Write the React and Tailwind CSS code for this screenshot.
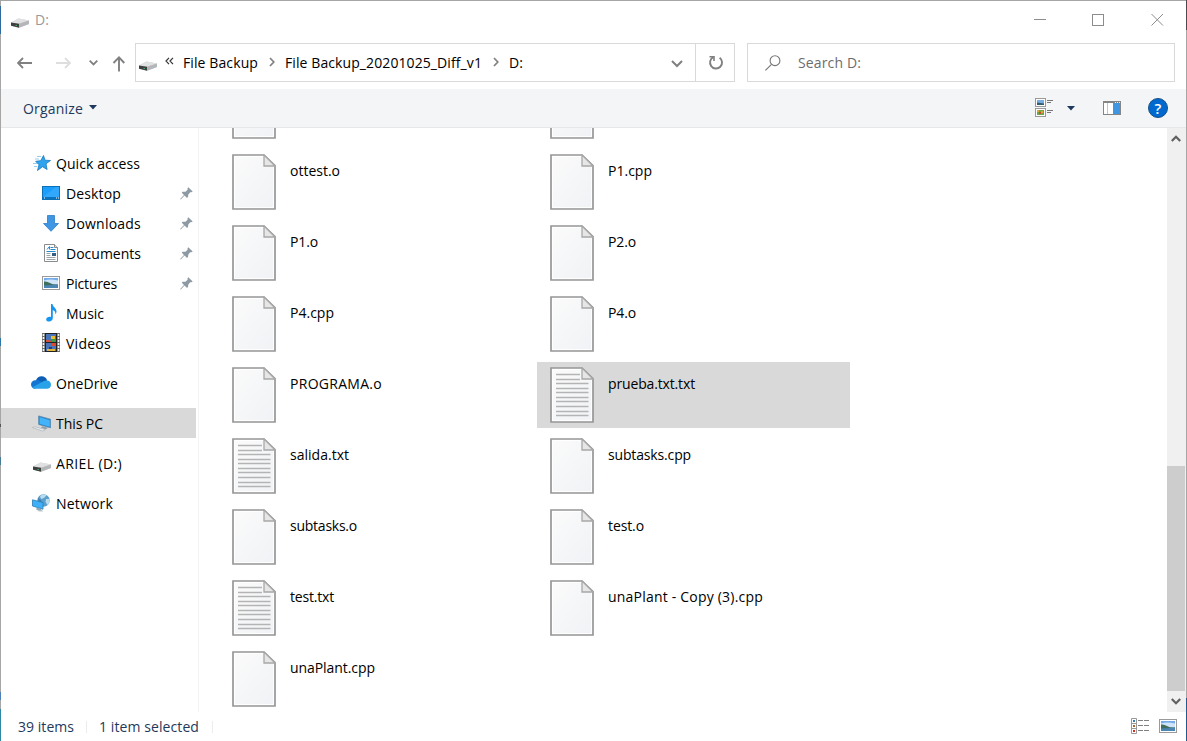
import React, { useLayoutEffect, useRef } from "react";

/* Text label whose letter spacing is adjusted so that it fills a given width. */
function Label({ w, className = "", children }) {
  const ref = useRef(null);
  useLayoutEffect(() => {
    const el = ref.current;
    el.style.letterSpacing = "0px";
    const natural = el.getBoundingClientRect().width;
    el.style.letterSpacing = (w - natural) / el.textContent.length + "px";
  }, [w, children]);
  return (
    <span ref={ref} className={"shrink-0 whitespace-pre text-[14px] leading-5 " + className}>
      {children}
    </span>
  );
}

function DriveIcon() {
  return (
    <svg width="18" height="10" viewBox="0 0 18 10" className="shrink-0">
      <path d="M0 4.6 7.5.4 18 2.4V6L8 9.8 0 7.6Z" fill="#c9cacc" />
      <path d="M0 4.6 7.5.4 18 2.4 8 5.8Z" fill="#e0e1e2" />
      <path d="M0 4.4 8 5.7v4L0 7.8Z" fill="#3d3f40" />
      <path d="M8 5.7 18 2.4V6L8 9.8Z" fill="#b4b6b9" />
      <path d="M4.5 7h1.5v1H4.5z" fill="#3fae5b" />
    </svg>
  );
}

function Chevron({ className = "", d = "M1 1l4 4 4-4", w = 10, h = 6, color = "#808080", sw = 2 }) {
  return (
    <svg width={w} height={h} viewBox={`0 0 ${w} ${h}`} className={"shrink-0 " + className}>
      <path d={d} fill="none" stroke={color} strokeWidth={sw} />
    </svg>
  );
}

function PictureIcon() {
  return (
    <svg width="18" height="14" viewBox="0 0 18 14">
      <rect x=".5" y=".5" width="17" height="13" fill="#fff" stroke="#9a9a9a" />
      <rect x="2" y="2" width="14" height="10" fill="#72abea" />
      <path d="M2 4.500q6-2 14 0v4H2z" fill="#cfe4f8" />
      <path d="M2 5.500q3-.5 6 1.500t8 1.500V10H2z" fill="#3f6f5c" />
      <path d="M2 9.500l14-.8V12H2z" fill="#4b85b4" />
    </svg>
  );
}

const icons = {
  quick: (
    <svg width="18" height="16" viewBox="0 0 18 16" className="ml-[2px]">
      <path d="M10.500.5l1.500 4.700 5.500.3-4.500 3.300 1.100 5.700-4.600-2.800-5 3.800 1.500-5.700L2.700 6.300l5-.6z" fill="#2ea3ee" stroke="#1779bd" strokeWidth=".8" />
      <path d="M4 1.500h4M2 4h4M0 8.500h4M1 11.500h3" stroke="#7cc0ec" strokeWidth=".8" />
    </svg>
  ),
  desktop: (
    <svg width="18" height="14" viewBox="0 0 18 14">
      <rect x=".5" y=".5" width="17" height="13" fill="#1a9dfb" stroke="#0a70b8" />
      <path d="M1 11 14 1h3v10H1z" fill="#31a8fd" />
      <rect x="1" y="11" width="16" height="2" fill="#0b72bd" />
      <path d="M2 12h1M14 12h1M16 12h1" stroke="#fff" />
    </svg>
  ),
  downloads: (
    <svg width="16" height="17" viewBox="0 0 16 17">
      <path d="M4.500.5h7v8h4L8 16.300.5 8.500h4z" fill="#3f96e3" stroke="#2b7cc8" strokeWidth=".8" />
    </svg>
  ),
  documents: (
    <svg width="14" height="18" viewBox="0 0 14 18">
      <path d="M.5.500h10l3 3v14H.5z" fill="#fff" stroke="#8c8c8c" />
      <path d="M10.500.5v3h3" fill="#ddd" stroke="#8c8c8c" />
      <path d="M3 5.500 5.500 2.500v3M6.500 3.500h3M6.500 5.500h5M2.500 7.500h9" fill="none" stroke="#2389c9" />
      <path d="M2.500 9.500h4M2.500 11.500h4M2.500 13.500h9M2.500 15.500h9" stroke="#9aa4ab" />
      <rect x="8" y="9" width="4" height="3" fill="#315f86" />
    </svg>
  ),
  pictures: <PictureIcon />,
  music: (
    <svg width="11" height="18" viewBox="0 0 11 18">
      <path d="M5 0h1.500c.3 3 4 4.200 4 7.300 0 1.300-.5 2.400-1.200 3.200.5-2.500-.8-3.700-2.500-4.500V14c0 2.200-1.800 3.600-3.700 3.600C1.300 17.600.2 16.700.2 15.400c0-1.700 2.300-3 4.800-2.400z" fill="#1496f0" />
    </svg>
  ),
  videos: (
    <svg width="18" height="19" viewBox="0 0 18 19" className="mb-px">
      <rect width="18" height="19" fill="#6a6a6c" />
      <rect x="3" width="12" height="19" fill="#222" />
      <path d="M1.500 1v18M16.500 1v18" stroke="#f4f4f4" strokeWidth="1.600" strokeDasharray="2 1" />
      <rect x="4" y="1" width="10" height="8" fill="#4a74b8" />
      <rect x="4" y="10" width="10" height="8" fill="#4a74b8" />
      <path d="M4 7h3l2 1v1H4z" fill="#d6503c" />
      <path d="M9 3h4v3H9z" fill="#e8bd2e" />
      <path d="M10 6h3v3h-3z" fill="#3f9a46" />
      <path d="M10 10h3v3h-3z" fill="#d94b32" />
      <path d="M5 16h8v2H5z" fill="#e2b63a" />
      <path d="M7 14h3v2H7z" fill="#223a78" />
    </svg>
  ),
  onedrive: (
    <svg width="20" height="13" viewBox="0 0 20 13" className="mb-px">
      <path d="M5 4.300C6 1.600 8 .2 10.500.2c2.900 0 5 1.700 5.700 4.300L9 9z" fill="#0c5fb5" />
      <path d="M4.300 4.200C2 4.200 0 6.100 0 8.500 0 11 2 12.800 4.300 12.800L13 7 8 4.500c-1-.6-2.300-.5-3.700-.3z" fill="#1376d2" />
      <path d="M16 4.500c2.300 0 4 1.900 4 4.200 0 2.400-1.800 4.100-4.100 4.100H4.300c-1.300 0-2.400-.5-3.200-1.400L12 5.400c1-.7 2.500-.9 4-.9z" fill="#2aa2ea" />
    </svg>
  ),
  pc: (
    <svg width="20" height="17" viewBox="0 0 20 17" className="mt-px ml-px">
      <path d="M7 .5 19.500 4v9L7 9.500z" fill="#2b88cc" stroke="#4d7fa6" strokeWidth=".7" />
      <path d="M8 1.900 18.700 5v6.800L8 8.700z" fill="#43b4fa" />
      <path d="M11 11.500 17 13l-2.500 1.500-5-1.500z" fill="#8fa0ad" />
      <path d="M.5 12.800 3 12l11 3-2.500 1.500z" fill="#f4f6f7" stroke="#a5adb3" strokeWidth=".7" />
    </svg>
  ),
  drive: <div className="mt-[7px] mr-[-1px]"><DriveIcon /></div>,
  network: (
    <svg width="18" height="18" viewBox="0 0 18 18">
      <circle cx="11.500" cy="6.500" r="6.200" fill="#5c9fca" />
      <path d="M8 2c2-2 5-2 6.500-.8L12 4 9 5zM14 5l3.500 0c.4 3-.5 5-2 6l-2-3z" fill="#b9dcee" />
      <path d="M6 4 9 6l2 5H7z" fill="#3d7fae" />
      <path d="M.5 5.800 11 8.500v6.700L.5 12z" fill="#3fb0f7" stroke="#287eb9" strokeWidth=".8" />
      <path d="M5 13.500 9.500 15l-1 1.500-4.500-1z" fill="#8fa4b2" />
      <path d="M5 16h5l1 1.500H7z" fill="#b8c3ca" />
    </svg>
  ),
};

function Pin() {
  return (
    <svg width="13" height="13" viewBox="0 0 13 13" className="mr-[3px]">
      <path d="M8.300.3 12.700 4.600 11.400 5.300 10.200 5.200 8.300 7.500 8 10.300 6.800 10.800 4.500 8.500 1 12.300.3 12.500.4 11.800 4 8 1.800 5.800 2.500 4.800 5.500 4.700 7.600 2.700 7.500 1.300Z" fill="#8d9aa4" />
    </svg>
  );
}

function NavRow({ icon, text, w, child, pinned, selected }) {
  return (
    <div className={"flex h-[30px] w-[195px] items-center " + (selected ? "bg-[#d9d9d9]" : "")}>
      <div className={"flex w-[20px] shrink-0 justify-center " + (child ? "ml-[40px]" : "ml-[30px]")}>
        {icons[icon]}
      </div>
      <Label w={w} className="mt-[2px] ml-[5px]">{text}</Label>
      {pinned && <div className="ml-auto"><Pin /></div>}
    </div>
  );
}

function FileIcon({ lined }) {
  return (
    <svg width="44" height="56" viewBox="0 0 44 56" className="shrink-0">
      <defs>
        <linearGradient id="sheet" x1="0" y1="0" x2="1" y2="1">
          <stop offset="0" stopColor="#fbfbfb" />
          <stop offset="1" stopColor="#f0f2f5" />
        </linearGradient>
      </defs>
      <path d="M1 1H32L43 11.500V55H1Z" fill="url(#sheet)" stroke="#979797" strokeWidth="1.700" />
      <path d="M2.500 2.500H31M2.500 2.500V53.500H41.500V12" fill="none" stroke="#fff" strokeWidth=".9" />
      <path d="M32 1V12H43Z" fill="#e6e6e6" stroke="#a8a8a8" strokeWidth="1.300" />
      {lined && (
        <path
          d="M6 7.500H30M6 12.500H30M6 16.500H38.500M6 21.500H38.500M6 25.500H38.500M6 30.500H38.500M6 34.500H38.500M6 39.500H38.500M6 44.500H38.500M6 48.500H38.500"
          stroke="#b4b4b4"
          strokeWidth="1.500"
        />
      )}
    </svg>
  );
}

function FileCell({ name, w, lined, selected }) {
  return (
    <div className={"flex h-[66px] w-[313px] items-start pt-[5px] pl-[13px] " + (selected ? "bg-[#d9d9d9]" : "")}>
      <FileIcon lined={lined} />
      {name && <Label w={w} className="mt-[7px] ml-[14px]">{name}</Label>}
    </div>
  );
}

const files = [
  {}, {},
  { name: "ottest.o", w: 50 }, { name: "P1.cpp", w: 44 },
  { name: "P1.o", w: 28 }, { name: "P2.o", w: 28 },
  { name: "P4.cpp", w: 44 }, { name: "P4.o", w: 28 },
  { name: "PROGRAMA.o", w: 92 }, { name: "prueba.txt.txt", w: 87, lined: true, selected: true },
  { name: "salida.txt", w: 59, lined: true }, { name: "subtasks.cpp", w: 83 },
  { name: "subtasks.o", w: 67 }, { name: "test.o", w: 36 },
  { name: "test.txt", w: 44, lined: true }, { name: "unaPlant - Copy (3).cpp", w: 155 },
  { name: "unaPlant.cpp", w: 85 },
];

function TitleBar() {
  return (
    <div className="flex h-[37px] items-center">
      <div className="mt-[7px] ml-[10px]"><DriveIcon /></div>
      <Label w={14} className="ml-[6px] text-[#999999]">D:</Label>
      <svg width="130" height="14" viewBox="0 0 130 14" className="mr-[22px] ml-auto" fill="none" stroke="#8c8c8c">
        <path d="M0 6.500H12" />
        <rect x="58.500" y="1.500" width="11" height="11" />
        <path d="M117.500 1 129 12.500M129 1 117.500 12.500" />
      </svg>
    </div>
  );
}

function AddressRow() {
  return (
    <div className="flex h-[51px] items-start pt-[5px]">
      <div className="flex h-[39px] w-[134px] items-center">
        <svg width="16" height="12" viewBox="0 0 16 12" className="ml-4" fill="none" stroke="#808080" strokeWidth="1.800">
          <path d="M15 6H1.500M6 1 1 6l5 5" />
        </svg>
        <svg width="16" height="12" viewBox="0 0 16 12" className="ml-[23px]" fill="none" stroke="#dedede" strokeWidth="1.800">
          <path d="M0 6H14M9 1l5 5-5 5" />
        </svg>
        <Chevron className="ml-[17px]" w={9} h={6} d="M.7.7 4.500 4.500 8.300.7" sw={1.800} />
        <svg width="13" height="16" viewBox="0 0 13 16" className="mt-[3px] ml-[14px]" fill="none" stroke="#808080" strokeWidth="1.900">
          <path d="M7 15.500V1.500M1.500 7 7 1.400 12.300 7" />
        </svg>
      </div>
      <div className="flex h-[39px] w-[600px] items-center border border-[#d9d9d9]">
        <div className="mt-[7px] ml-[3px]"><DriveIcon /></div>
        <svg width="9" height="8" viewBox="0 0 9 8" className="mb-[3px] ml-[8px]" fill="none" stroke="#333" strokeWidth="1.200">
          <path d="M4 .8 1 4l3 3.200M8 .8 5 4l3 3.200" />
        </svg>
        <Label w={75} className="ml-[9px]">File Backup</Label>
        <Chevron className="mb-[2px] ml-[11px]" w={6} h={10} d="M1 1l3.800 4L1 9" sw={1.700} />
        <Label w={197} className="ml-[10px]">File Backup_20201025_Diff_v1</Label>
        <Chevron className="mb-[2px] ml-[11px]" w={6} h={10} d="M1 1l3.800 4L1 9" sw={1.700} />
        <Label w={14} className="ml-[10px]">D:</Label>
        <Chevron className="mt-[3px] ml-auto mr-[12px]" w={12} h={8} d="M1 1l5 5 5-5" />
        <div className="flex h-full w-[39px] items-center justify-center border-l border-[#d9d9d9]">
          <svg width="16" height="16" viewBox="0 0 16 16" className="ml-px" fill="none" stroke="#808080" strokeWidth="1.900">
            <path d="M11.600 2.700a6 6 0 1 1-6.300-.5" />
            <path d="M1.500 1.800H6V6" strokeWidth="1.600" />
          </svg>
        </div>
      </div>
      <div className="ml-3 flex h-[39px] w-[428px] items-center border border-[#d9d9d9]">
        <svg width="16" height="16" viewBox="0 0 16 16" className="ml-[17px]" fill="none" stroke="#757575" strokeWidth="1.100">
          <circle cx="10" cy="5.700" r="4.900" />
          <path d="M6.500 9.300.4 15.400" />
        </svg>
        <Label w={63} className="ml-[17px] text-[#6d6d6d]">Search D:</Label>
      </div>
    </div>
  );
}

function Toolbar() {
  return (
    <div className="flex h-[39px] shrink-0 items-center border-b border-[#e6e7e8] bg-[#f4f5f7] text-[#1e395b]">
      <Label w={60} className="mt-[2px] ml-[22px]">Organize</Label>
      <svg width="8" height="5" viewBox="0 0 8 5" className="mb-px ml-[6px]"><path d="M0 0h8L4 4.500z" fill="#1e395b" /></svg>
      <svg width="18" height="19" viewBox="0 0 18 19" className="mb-px ml-auto">
        <rect x=".5" y=".5" width="10" height="8" fill="#fff" stroke="#999" />
        <rect x="2" y="2" width="7" height="5" fill="#76acdf" />
        <path d="M2 4.500l7 1V7H2z" fill="#345c6b" />
        <rect x=".5" y="10.500" width="10" height="8" fill="#fff" stroke="#999" />
        <rect x="2" y="12" width="7" height="5" fill="#6fa646" />
        <path d="M2 12h2v2H2zM6 13h2v2H6z" fill="#e0a33a" />
        <path d="M4 14h2v2H4z" fill="#c94a35" />
        <path d="M12 2.500h6M12 4.500h4M12 12.500h6M12 14.500h4" stroke="#777" />
      </svg>
      <svg width="8" height="5" viewBox="0 0 8 5" className="mr-[-1px] ml-[14px]"><path d="M0 0h8L4 4.500z" fill="#1e395b" /></svg>
      <svg width="18" height="14" viewBox="0 0 18 14" className="ml-[29px]">
        <rect x=".5" y=".5" width="17" height="13" fill="#fff" stroke="#858585" />
        <path d="M1 1.500h16" stroke="#858585" />
        <path d="M12 1.500h1M14 1.500h1M16 1.500h1" stroke="#eee" />
        <path d="M4.500 2v11" stroke="#c5c5c5" />
        <rect x="10" y="2" width="7" height="11" fill="#3f96e3" />
      </svg>
      <div className="mr-[18px] ml-[27px] flex size-5 items-center justify-center rounded-full border border-[#174f87] bg-[#0069cf] text-[15px] leading-none font-semibold text-white">
        ?
      </div>
    </div>
  );
}

function Sidebar() {
  return (
    <div className="flex w-[197px] shrink-0 flex-col gap-[10px] pt-5">
      <div>
        <NavRow icon="quick" text="Quick access" w={84} />
        <NavRow icon="desktop" text="Desktop" w={55} child pinned />
        <NavRow icon="downloads" text="Downloads" w={75} child pinned />
        <NavRow icon="documents" text="Documents" w={75} child pinned />
        <NavRow icon="pictures" text="Pictures" w={51} child pinned />
        <NavRow icon="music" text="Music" w={38} child />
        <NavRow icon="videos" text="Videos" w={45} child />
      </div>
      <NavRow icon="onedrive" text="OneDrive" w={62} />
      <NavRow icon="pc" text="This PC" w={47} selected />
      <NavRow icon="drive" text="ARIEL (D:)" w={66} />
      <NavRow icon="network" text="Network" w={57} />
    </div>
  );
}

function Scrollbar() {
  return (
    <div className="flex w-[19px] shrink-0 flex-col items-start bg-[#f0f0f0]">
      <div className="flex h-[22px] w-[18px] items-center justify-center pb-[2px]">
        <Chevron w={10} h={7} d="M.8 6 5 1.700 9.200 6" color="#606060" sw={2.200} />
      </div>
      <div className="mt-[316px] h-[225px] w-[18px] bg-[#cdcdcd]" />
      <div className="flex h-[21px] w-[18px] items-center justify-center">
        <Chevron w={10} h={7} d="M.8 1 5 5.300 9.200 1" color="#606060" sw={2.200} />
      </div>
    </div>
  );
}

function StatusBar() {
  return (
    <div className="flex flex-1 items-center text-[#1e395b]">
      <Label w={56} className="ml-[17px]">39 items</Label>
      <div className="ml-[12px] h-3 w-px bg-[#ececec]" />
      <Label w={100} className="ml-[12px]">1 item selected</Label>
      <div className="ml-[13px] h-3 w-px bg-[#ececec]" />
      <svg width="18" height="16" viewBox="0 0 18 16" className="mb-[2px] ml-auto">
        <path d="M.5.500h5v15h-5zM.5 5.500h5M.5 10.500h5" fill="#fff" stroke="#999" />
        <path d="M2 2h2v2H2z" fill="#2f7fb5" />
        <path d="M2 7h2v2H2z" fill="#a4672c" />
        <path d="M2 12h2v2H2z" fill="#d32f1d" />
        <path d="M7 2.500h5M13 2.500h5M7 7.500h5M13 7.500h5M7 12.500h5M13 12.500h5" stroke="#808080" />
      </svg>
      <div className="mr-[9px] mb-[2px] ml-[10px]"><PictureIcon /></div>
    </div>
  );
}

export default function App() {
  return (
    <div className="flex h-[741px] w-[1187px] overflow-hidden bg-white font-['Open_Sans',sans-serif] text-black">
      <div className="flex w-px shrink-0 flex-col bg-[#a6a6a6]">
        <div className="mt-[6px] h-[28px] bg-[#2e6a9e]" />
        <div className="mt-[304px] h-[8px] bg-[#2b75a8]" />
        <div className="mt-[78px] h-[3px] bg-[#555]" />
        <div className="mt-[30px] h-[8px] bg-[#477b95]" />
        <div className="mt-[227px] h-[8px] bg-[#4e82b4]" />
        <div className="mt-[9px] flex-1 bg-[#2f87a6]" />
      </div>
      <div className="flex w-[1185px] shrink-0 flex-col border-t border-[#a6a6a6]">
        <TitleBar />
        <AddressRow />
        <Toolbar />
        <div className="flex h-[584px] shrink-0">
          <Sidebar />
          <div className="w-px shrink-0 bg-[#f3f3f3]" />
          <div className="flex flex-1 flex-col justify-end overflow-hidden pl-[20px]">
            <div className="grid grid-cols-[313px_313px] gap-x-[5px] gap-y-[5px]">
              {files.map((f, i) => <FileCell key={i} {...f} />)}
            </div>
          </div>
          <Scrollbar />
        </div>
        <StatusBar />
      </div>
      <div className="flex w-px shrink-0 flex-col bg-[#a6a6a6]">
        <div className="h-[30px] bg-[#4a4a50]" />
        <div className="mt-[668px] flex-1 bg-[#245a93]" />
      </div>
    </div>
  );
}
